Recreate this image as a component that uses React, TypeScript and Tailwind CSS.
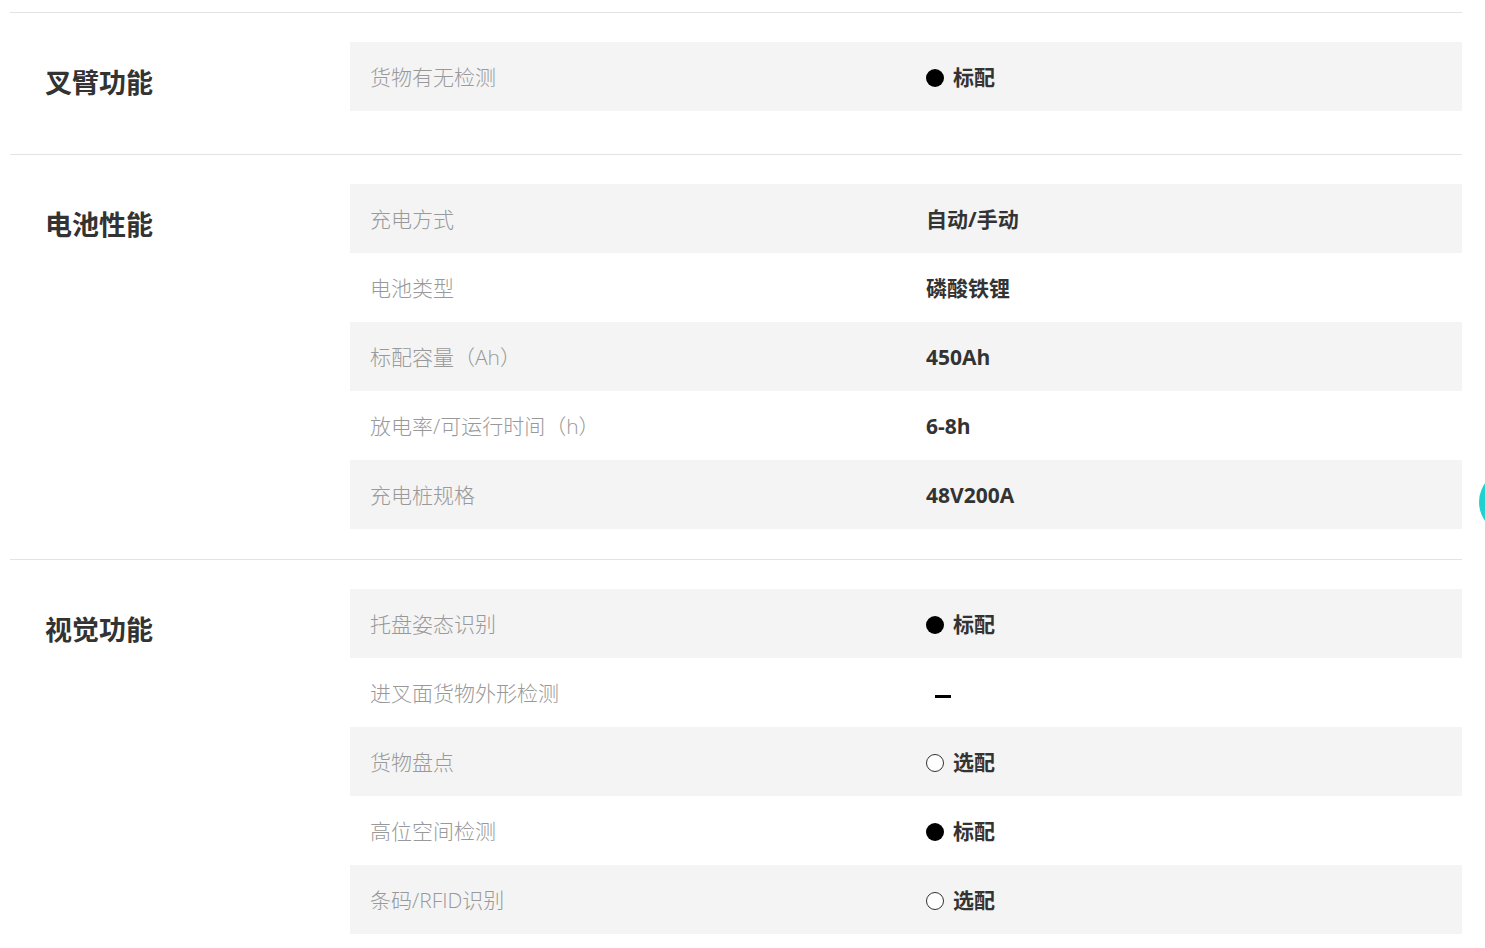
import React from 'react';

type Val = { type: 'std' | 'opt' | 'none' | 'text'; text?: string };
type Row = { label: string; value: Val };
type Section = { title: string; rows: Row[] };

const STD: Val = { type: 'std' };
const OPT: Val = { type: 'opt' };

const SECTIONS: Section[] = [
  {
    title: '叉臂功能',
    rows: [{ label: '货物有无检测', value: STD }],
  },
  {
    title: '电池性能',
    rows: [
      { label: '充电方式', value: { type: 'text', text: '自动/手动' } },
      { label: '电池类型', value: { type: 'text', text: '磷酸铁锂' } },
      { label: '标配容量（Ah）', value: { type: 'text', text: '450Ah' } },
      { label: '放电率/可运行时间（h）', value: { type: 'text', text: '6-8h' } },
      { label: '充电桩规格', value: { type: 'text', text: '48V200A' } },
    ],
  },
  {
    title: '视觉功能',
    rows: [
      { label: '托盘姿态识别', value: STD },
      { label: '进叉面货物外形检测', value: { type: 'none' } },
      { label: '货物盘点', value: OPT },
      { label: '高位空间检测', value: STD },
      { label: '条码/RFID识别', value: OPT },
    ],
  },
];

const ValueCell: React.FC<{ value: Val }> = ({ value }) => {
  if (value.type === 'none') {
    return <span className="ml-[9px] mt-[5px] inline-block w-[16px] h-[3px] bg-black" />;
  }
  if (value.type === 'text') {
    return <span className="font-bold text-[21px] text-[#333]">{value.text}</span>;
  }
  return (
    <div className="flex items-center">
      {value.type === 'std' ? (
        <span className="w-[18px] h-[18px] rounded-full bg-black" />
      ) : (
        <span className="w-[18px] h-[18px] rounded-full border border-[#333] bg-white" />
      )}
      <span className="ml-[9px] font-bold text-[21px] text-[#333]">
        {value.type === 'std' ? '标配' : '选配'}
      </span>
    </div>
  );
};

const App: React.FC = () => {
  return (
    <div
      className="relative w-full min-h-[948px] bg-white overflow-hidden pt-[12px]"
      style={{ fontFamily: '"Open Sans", "Noto Sans CJK SC", sans-serif' }}
    >
      {SECTIONS.map((sec) => (
        <div key={sec.title} className="ml-[10px] w-[1452px] border-t border-[#e3e3e3] pt-[29px] pb-[30px] flex">
          <div className="w-[340px] shrink-0 pl-[35px] pt-[21px] min-h-[82px]">
            <h3 className="text-[27px] leading-[40px] font-bold text-[#333]">{sec.title}</h3>
          </div>
          <div className="flex-1">
            {sec.rows.map((row, i) => (
              <div
                key={row.label}
                className={`grid grid-cols-2 h-[69px] items-center pt-[2px] ${i % 2 === 0 ? 'bg-[#f4f4f4]' : 'bg-white'}`}
              >
                <div className="px-[20px] text-[21px] text-[#999] font-light">{row.label}</div>
                <div className="px-[20px] flex items-center">
                  <ValueCell value={row.value} />
                </div>
              </div>
            ))}
          </div>
        </div>
      ))}
      <div className="absolute left-[1479px] top-[470px] w-[64px] h-[64px] rounded-full bg-[#1ed2d2]" />
    </div>
  );
};

export default App;
